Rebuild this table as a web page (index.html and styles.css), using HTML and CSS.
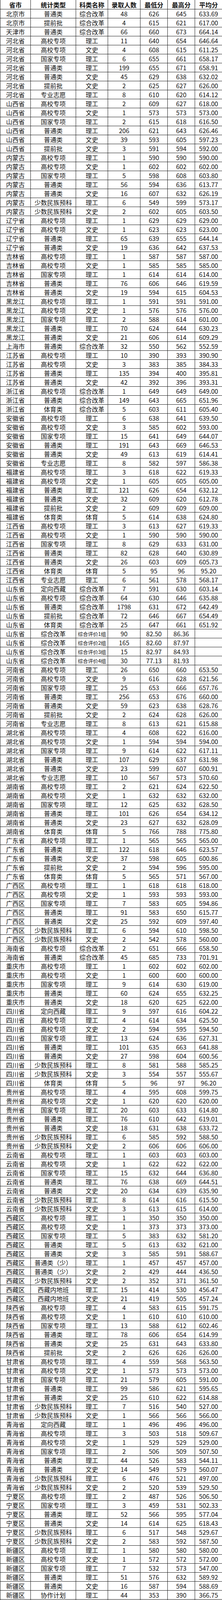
FILE: index.html
```html
<!DOCTYPE html>
<html lang="zh-CN">
<head>
<meta charset="utf-8">
<title>录取分数统计</title>
<link rel="stylesheet" href="styles.css">
</head>
<body>
<div class="sheet">
<div class="r h"><span>省市</span><span>统计类型</span><span>科类名称</span><span>录取人数</span><span>最低分</span><span>最高分</span><span>平均分</span></div>
<div class="r"><span>北京市</span><span>普通类</span><span>综合改革</span><span>48</span><span>626</span><span>645</span><span>633.69</span></div>
<div class="r"><span>北京市</span><span>提前批</span><span>综合改革</span><span>4</span><span>615</span><span>621</span><span>617.00</span></div>
<div class="r"><span>天津市</span><span>普通类</span><span>综合改革</span><span>66</span><span>660</span><span>673</span><span>664.14</span></div>
<div class="r"><span>河北省</span><span>高校专项</span><span>理工</span><span>11</span><span>640</span><span>654</span><span>646.64</span></div>
<div class="r"><span>河北省</span><span>高校专项</span><span>文史</span><span>4</span><span>608</span><span>615</span><span>611.25</span></div>
<div class="r"><span>河北省</span><span>国家专项</span><span>理工</span><span>6</span><span>655</span><span>661</span><span>658.17</span></div>
<div class="r"><span>河北省</span><span>普通类</span><span>理工</span><span>199</span><span>655</span><span>671</span><span>658.91</span></div>
<div class="r"><span>河北省</span><span>普通类</span><span>文史</span><span>45</span><span>629</span><span>638</span><span>632.02</span></div>
<div class="r"><span>河北省</span><span>提前批</span><span>文史</span><span>2</span><span>625</span><span>627</span><span>626.00</span></div>
<div class="r"><span>河北省</span><span>专业志愿</span><span>理工</span><span>8</span><span>610</span><span>620</span><span>614.12</span></div>
<div class="r"><span>山西省</span><span>高校专项</span><span>理工</span><span>2</span><span>609</span><span>627</span><span>618.00</span></div>
<div class="r"><span>山西省</span><span>高校专项</span><span>文史</span><span>1</span><span>573</span><span>573</span><span>573.00</span></div>
<div class="r"><span>山西省</span><span>国家专项</span><span>理工</span><span>2</span><span>615</span><span>618</span><span>616.50</span></div>
<div class="r"><span>山西省</span><span>普通类</span><span>理工</span><span>206</span><span>621</span><span>643</span><span>626.46</span></div>
<div class="r"><span>山西省</span><span>普通类</span><span>文史</span><span>39</span><span>593</span><span>605</span><span>597.23</span></div>
<div class="r"><span>山西省</span><span>提前批</span><span>文史</span><span>3</span><span>591</span><span>594</span><span>592.00</span></div>
<div class="r"><span>内蒙古</span><span>高校专项</span><span>理工</span><span>1</span><span>590</span><span>590</span><span>590.00</span></div>
<div class="r"><span>内蒙古</span><span>高校专项</span><span>文史</span><span>1</span><span>602</span><span>602</span><span>602.00</span></div>
<div class="r"><span>内蒙古</span><span>国家专项</span><span>理工</span><span>5</span><span>598</span><span>608</span><span>603.80</span></div>
<div class="r"><span>内蒙古</span><span>普通类</span><span>理工</span><span>56</span><span>594</span><span>636</span><span>613.77</span></div>
<div class="r"><span>内蒙古</span><span>普通类</span><span>文史</span><span>16</span><span>607</span><span>632</span><span>626.19</span></div>
<div class="r"><span>内蒙古</span><span>少数民族预科</span><span>理工</span><span>6</span><span>549</span><span>599</span><span>573.17</span></div>
<div class="r"><span>内蒙古</span><span>少数民族预科</span><span>文史</span><span>2</span><span>602</span><span>605</span><span>603.50</span></div>
<div class="r"><span>辽宁省</span><span>高校专项</span><span>理工</span><span>1</span><span>629</span><span>629</span><span>629.00</span></div>
<div class="r"><span>辽宁省</span><span>高校专项</span><span>文史</span><span>1</span><span>623</span><span>623</span><span>623.00</span></div>
<div class="r"><span>辽宁省</span><span>普通类</span><span>理工</span><span>65</span><span>639</span><span>655</span><span>644.14</span></div>
<div class="r"><span>辽宁省</span><span>普通类</span><span>文史</span><span>19</span><span>636</span><span>642</span><span>637.53</span></div>
<div class="r"><span>吉林省</span><span>高校专项</span><span>理工</span><span>1</span><span>587</span><span>587</span><span>587.00</span></div>
<div class="r"><span>吉林省</span><span>高校专项</span><span>文史</span><span>1</span><span>585</span><span>585</span><span>585.00</span></div>
<div class="r"><span>吉林省</span><span>国家专项</span><span>理工</span><span>1</span><span>614</span><span>614</span><span>614.00</span></div>
<div class="r"><span>吉林省</span><span>普通类</span><span>理工</span><span>76</span><span>606</span><span>646</span><span>619.59</span></div>
<div class="r"><span>吉林省</span><span>普通类</span><span>文史</span><span>19</span><span>594</span><span>615</span><span>604.53</span></div>
<div class="r"><span>黑龙江</span><span>高校专项</span><span>理工</span><span>1</span><span>591</span><span>591</span><span>591.00</span></div>
<div class="r"><span>黑龙江</span><span>高校专项</span><span>文史</span><span>1</span><span>576</span><span>576</span><span>576.00</span></div>
<div class="r"><span>黑龙江</span><span>国家专项</span><span>理工</span><span>2</span><span>588</span><span>614</span><span>601.00</span></div>
<div class="r"><span>黑龙江</span><span>普通类</span><span>理工</span><span>70</span><span>624</span><span>644</span><span>630.23</span></div>
<div class="r"><span>黑龙江</span><span>普通类</span><span>文史</span><span>21</span><span>606</span><span>614</span><span>609.29</span></div>
<div class="r"><span>上海市</span><span>普通类</span><span>综合改革</span><span>32</span><span>550</span><span>562</span><span>552.59</span></div>
<div class="r"><span>江苏省</span><span>高校专项</span><span>理工</span><span>10</span><span>390</span><span>393</span><span>390.90</span></div>
<div class="r"><span>江苏省</span><span>高校专项</span><span>文史</span><span>3</span><span>383</span><span>385</span><span>384.33</span></div>
<div class="r"><span>江苏省</span><span>普通类</span><span>理工</span><span>135</span><span>394</span><span>400</span><span>395.81</span></div>
<div class="r"><span>江苏省</span><span>普通类</span><span>文史</span><span>42</span><span>392</span><span>396</span><span>393.31</span></div>
<div class="r"><span>浙江省</span><span>高校专项</span><span>综合改革</span><span>1</span><span>649</span><span>649</span><span>649.00</span></div>
<div class="r"><span>浙江省</span><span>普通类</span><span>综合改革</span><span>149</span><span>643</span><span>665</span><span>651.96</span></div>
<div class="r"><span>浙江省</span><span>体育类</span><span>综合改革</span><span>5</span><span>603</span><span>611</span><span>605.40</span></div>
<div class="r"><span>安徽省</span><span>高校专项</span><span>理工</span><span>6</span><span>638</span><span>641</span><span>639.50</span></div>
<div class="r"><span>安徽省</span><span>高校专项</span><span>文史</span><span>3</span><span>585</span><span>602</span><span>593.00</span></div>
<div class="r"><span>安徽省</span><span>国家专项</span><span>理工</span><span>15</span><span>641</span><span>649</span><span>644.07</span></div>
<div class="r"><span>安徽省</span><span>普通类</span><span>理工</span><span>191</span><span>643</span><span>669</span><span>646.53</span></div>
<div class="r"><span>安徽省</span><span>普通类</span><span>文史</span><span>49</span><span>613</span><span>619</span><span>614.41</span></div>
<div class="r"><span>安徽省</span><span>专业志愿</span><span>理工</span><span>8</span><span>582</span><span>597</span><span>586.38</span></div>
<div class="r"><span>福建省</span><span>高校专项</span><span>理工</span><span>3</span><span>618</span><span>622</span><span>619.33</span></div>
<div class="r"><span>福建省</span><span>高校专项</span><span>文史</span><span>1</span><span>605</span><span>605</span><span>605.00</span></div>
<div class="r"><span>福建省</span><span>普通类</span><span>理工</span><span>121</span><span>626</span><span>654</span><span>632.12</span></div>
<div class="r"><span>福建省</span><span>普通类</span><span>文史</span><span>32</span><span>609</span><span>620</span><span>612.78</span></div>
<div class="r"><span>福建省</span><span>提前批</span><span>文史</span><span>2</span><span>609</span><span>609</span><span>609.00</span></div>
<div class="r"><span>福建省</span><span>体育类</span><span>体育</span><span>5</span><span>614</span><span>638</span><span>624.80</span></div>
<div class="r"><span>江西省</span><span>高校专项</span><span>理工</span><span>3</span><span>613</span><span>627</span><span>619.33</span></div>
<div class="r"><span>江西省</span><span>高校专项</span><span>文史</span><span>1</span><span>590</span><span>590</span><span>590.00</span></div>
<div class="r"><span>江西省</span><span>国家专项</span><span>理工</span><span>8</span><span>629</span><span>633</span><span>631.00</span></div>
<div class="r"><span>江西省</span><span>普通类</span><span>理工</span><span>82</span><span>628</span><span>640</span><span>630.89</span></div>
<div class="r"><span>江西省</span><span>普通类</span><span>文史</span><span>26</span><span>603</span><span>609</span><span>605.73</span></div>
<div class="r"><span>江西省</span><span>体育类</span><span>体育</span><span>5</span><span>95</span><span>96</span><span>95.20</span></div>
<div class="r"><span>江西省</span><span>专业志愿</span><span>理工</span><span>6</span><span>561</span><span>578</span><span>568.17</span></div>
<div class="r"><span>山东省</span><span>定向西藏</span><span>综合改革</span><span>7</span><span>591</span><span>630</span><span>603.14</span></div>
<div class="r"><span>山东省</span><span>高校专项</span><span>综合改革</span><span>64</span><span>630</span><span>646</span><span>635.88</span></div>
<div class="r"><span>山东省</span><span>普通类</span><span>综合改革</span><span>1798</span><span>631</span><span>672</span><span>642.49</span></div>
<div class="r"><span>山东省</span><span>提前批</span><span>综合改革</span><span>72</span><span>646</span><span>667</span><span>654.49</span></div>
<div class="r"><span>山东省</span><span>体育类</span><span>综合改革</span><span>25</span><span>647</span><span>661</span><span>651.92</span></div>
<div class="r"><span>山东省</span><span>综合改革</span><span class="s">综合评价1组</span><span>90</span><span>82.50</span><span>86.36</span><span></span></div>
<div class="r"><span>山东省</span><span>综合改革</span><span class="s">综合评价2组</span><span>165</span><span>82.60</span><span>87.97</span><span></span></div>
<div class="r"><span>山东省</span><span>综合改革</span><span class="s">综合评价3组</span><span>15</span><span>82.97</span><span>84.93</span><span></span></div>
<div class="r"><span>山东省</span><span>综合改革</span><span class="s">综合评价4组</span><span>30</span><span>77.13</span><span>81.93</span><span></span></div>
<div class="r"><span>河南省</span><span>高校专项</span><span>理工</span><span>26</span><span>650</span><span>660</span><span>653.50</span></div>
<div class="r"><span>河南省</span><span>高校专项</span><span>文史</span><span>9</span><span>616</span><span>628</span><span>621.56</span></div>
<div class="r"><span>河南省</span><span>国家专项</span><span>理工</span><span>25</span><span>653</span><span>666</span><span>657.76</span></div>
<div class="r"><span>河南省</span><span>普通类</span><span>理工</span><span>256</span><span>653</span><span>676</span><span>660.00</span></div>
<div class="r"><span>河南省</span><span>普通类</span><span>文史</span><span>59</span><span>623</span><span>638</span><span>628.76</span></div>
<div class="r"><span>河南省</span><span>提前批</span><span>文史</span><span>2</span><span>624</span><span>628</span><span>626.00</span></div>
<div class="r"><span>河南省</span><span>专业志愿</span><span>理工</span><span>8</span><span>613</span><span>621</span><span>615.88</span></div>
<div class="r"><span>湖北省</span><span>高校专项</span><span>理工</span><span>4</span><span>608</span><span>622</span><span>616.00</span></div>
<div class="r"><span>湖北省</span><span>高校专项</span><span>文史</span><span>1</span><span>594</span><span>594</span><span>594.00</span></div>
<div class="r"><span>湖北省</span><span>国家专项</span><span>理工</span><span>9</span><span>614</span><span>622</span><span>617.11</span></div>
<div class="r"><span>湖北省</span><span>普通类</span><span>理工</span><span>107</span><span>629</span><span>637</span><span>631.98</span></div>
<div class="r"><span>湖北省</span><span>普通类</span><span>文史</span><span>23</span><span>599</span><span>607</span><span>600.91</span></div>
<div class="r"><span>湖北省</span><span>专业志愿</span><span>理工</span><span>10</span><span>567</span><span>573</span><span>570.60</span></div>
<div class="r"><span>湖南省</span><span>高校专项</span><span>理工</span><span>2</span><span>621</span><span>624</span><span>622.50</span></div>
<div class="r"><span>湖南省</span><span>高校专项</span><span>文史</span><span>1</span><span>632</span><span>632</span><span>632.00</span></div>
<div class="r"><span>湖南省</span><span>国家专项</span><span>理工</span><span>12</span><span>625</span><span>632</span><span>628.50</span></div>
<div class="r"><span>湖南省</span><span>普通类</span><span>理工</span><span>101</span><span>626</span><span>654</span><span>634.12</span></div>
<div class="r"><span>湖南省</span><span>普通类</span><span>文史</span><span>23</span><span>627</span><span>632</span><span>628.09</span></div>
<div class="r"><span>湖南省</span><span>体育类</span><span>体育</span><span>5</span><span>766</span><span>788</span><span>775.80</span></div>
<div class="r"><span>广东省</span><span>高校专项</span><span>理工</span><span>1</span><span>565</span><span>565</span><span>565.00</span></div>
<div class="r"><span>广东省</span><span>普通类</span><span>理工</span><span>122</span><span>618</span><span>646</span><span>623.57</span></div>
<div class="r"><span>广东省</span><span>普通类</span><span>文史</span><span>37</span><span>598</span><span>605</span><span>600.86</span></div>
<div class="r"><span>广东省</span><span>提前批</span><span>文史</span><span>2</span><span>594</span><span>596</span><span>595.00</span></div>
<div class="r"><span>广东省</span><span>体育类</span><span>体育</span><span>5</span><span>565</span><span>571</span><span>567.00</span></div>
<div class="r"><span>广西区</span><span>高校专项</span><span>理工</span><span>1</span><span>618</span><span>618</span><span>618.00</span></div>
<div class="r"><span>广西区</span><span>高校专项</span><span>文史</span><span>1</span><span>593</span><span>593</span><span>593.00</span></div>
<div class="r"><span>广西区</span><span>国家专项</span><span>理工</span><span>7</span><span>583</span><span>605</span><span>594.86</span></div>
<div class="r"><span>广西区</span><span>普通类</span><span>理工</span><span>91</span><span>583</span><span>650</span><span>615.77</span></div>
<div class="r"><span>广西区</span><span>普通类</span><span>文史</span><span>25</span><span>592</span><span>609</span><span>597.40</span></div>
<div class="r"><span>广西区</span><span>少数民族预科</span><span>理工</span><span>6</span><span>594</span><span>610</span><span>598.50</span></div>
<div class="r"><span>广西区</span><span>少数民族预科</span><span>文史</span><span>2</span><span>542</span><span>578</span><span>560.00</span></div>
<div class="r"><span>海南省</span><span>高校专项</span><span>综合改革</span><span>2</span><span>651</span><span>666</span><span>658.50</span></div>
<div class="r"><span>海南省</span><span>普通类</span><span>综合改革</span><span>45</span><span>685</span><span>733</span><span>701.91</span></div>
<div class="r"><span>重庆市</span><span>高校专项</span><span>理工</span><span>1</span><span>602</span><span>602</span><span>602.00</span></div>
<div class="r"><span>重庆市</span><span>高校专项</span><span>文史</span><span>1</span><span>600</span><span>600</span><span>600.00</span></div>
<div class="r"><span>重庆市</span><span>国家专项</span><span>理工</span><span>9</span><span>614</span><span>630</span><span>619.00</span></div>
<div class="r"><span>重庆市</span><span>普通类</span><span>理工</span><span>60</span><span>624</span><span>655</span><span>632.25</span></div>
<div class="r"><span>重庆市</span><span>普通类</span><span>文史</span><span>18</span><span>620</span><span>625</span><span>622.00</span></div>
<div class="r"><span>四川省</span><span>定向西藏</span><span>理工</span><span>9</span><span>597</span><span>616</span><span>604.22</span></div>
<div class="r"><span>四川省</span><span>高校专项</span><span>理工</span><span>4</span><span>614</span><span>634</span><span>625.50</span></div>
<div class="r"><span>四川省</span><span>高校专项</span><span>文史</span><span>2</span><span>594</span><span>595</span><span>594.50</span></div>
<div class="r"><span>四川省</span><span>国家专项</span><span>理工</span><span>13</span><span>624</span><span>636</span><span>627.31</span></div>
<div class="r"><span>四川省</span><span>普通类</span><span>理工</span><span>101</span><span>635</span><span>663</span><span>641.88</span></div>
<div class="r"><span>四川省</span><span>普通类</span><span>文史</span><span>27</span><span>598</span><span>604</span><span>600.56</span></div>
<div class="r"><span>四川省</span><span>少数民族预科</span><span>理工</span><span>8</span><span>581</span><span>588</span><span>585.25</span></div>
<div class="r"><span>四川省</span><span>少数民族预科</span><span>文史</span><span>3</span><span>554</span><span>557</span><span>555.67</span></div>
<div class="r"><span>四川省</span><span>体育类</span><span>体育</span><span>5</span><span>96</span><span>97</span><span>96.20</span></div>
<div class="r"><span>贵州省</span><span>高校专项</span><span>理工</span><span>4</span><span>595</span><span>608</span><span>599.75</span></div>
<div class="r"><span>贵州省</span><span>高校专项</span><span>文史</span><span>1</span><span>620</span><span>620</span><span>620.00</span></div>
<div class="r"><span>贵州省</span><span>国家专项</span><span>理工</span><span>20</span><span>603</span><span>633</span><span>614.80</span></div>
<div class="r"><span>贵州省</span><span>普通类</span><span>理工</span><span>76</span><span>610</span><span>642</span><span>619.01</span></div>
<div class="r"><span>贵州省</span><span>普通类</span><span>文史</span><span>18</span><span>631</span><span>638</span><span>633.72</span></div>
<div class="r"><span>贵州省</span><span>少数民族预科</span><span>理工</span><span>6</span><span>585</span><span>592</span><span>588.50</span></div>
<div class="r"><span>贵州省</span><span>少数民族预科</span><span>文史</span><span>2</span><span>606</span><span>606</span><span>606.00</span></div>
<div class="r"><span>云南省</span><span>高校专项</span><span>理工</span><span>1</span><span>603</span><span>603</span><span>603.00</span></div>
<div class="r"><span>云南省</span><span>高校专项</span><span>文史</span><span>1</span><span>622</span><span>622</span><span>622.00</span></div>
<div class="r"><span>云南省</span><span>国家专项</span><span>理工</span><span>15</span><span>632</span><span>644</span><span>636.80</span></div>
<div class="r"><span>云南省</span><span>普通类</span><span>理工</span><span>76</span><span>638</span><span>669</span><span>644.51</span></div>
<div class="r"><span>云南省</span><span>普通类</span><span>文史</span><span>20</span><span>634</span><span>639</span><span>635.90</span></div>
<div class="r"><span>云南省</span><span>少数民族预科</span><span>理工</span><span>8</span><span>614</span><span>616</span><span>615.50</span></div>
<div class="r"><span>云南省</span><span>少数民族预科</span><span>文史</span><span>3</span><span>613</span><span>615</span><span>614.00</span></div>
<div class="r"><span>西藏区</span><span>高校专项</span><span>理工</span><span>1</span><span>350</span><span>350</span><span>350.00</span></div>
<div class="r"><span>西藏区</span><span>高校专项</span><span>文史</span><span>1</span><span>373</span><span>373</span><span>373.00</span></div>
<div class="r"><span>西藏区</span><span>国家专项</span><span>理工</span><span>5</span><span>383</span><span>632</span><span>581.20</span></div>
<div class="r"><span>西藏区</span><span>普通类</span><span>理工</span><span>5</span><span>613</span><span>632</span><span>621.00</span></div>
<div class="r"><span>西藏区</span><span>普通类</span><span>文史</span><span>3</span><span>585</span><span>591</span><span>588.67</span></div>
<div class="r"><span>西藏区</span><span>普通类（少）</span><span>理工</span><span>1</span><span>457</span><span>457</span><span>457.00</span></div>
<div class="r"><span>西藏区</span><span>普通类（少）</span><span>文史</span><span>2</span><span>429</span><span>444</span><span>436.50</span></div>
<div class="r"><span>西藏区</span><span>少数民族预科</span><span>文史</span><span>2</span><span>352</span><span>371</span><span>361.50</span></div>
<div class="r"><span>西藏区</span><span>西藏内地班</span><span>理工</span><span>15</span><span>414</span><span>530</span><span>456.47</span></div>
<div class="r"><span>西藏区</span><span>西藏内地班</span><span>文史</span><span>21</span><span>419</span><span>505</span><span>457.24</span></div>
<div class="r"><span>陕西省</span><span>高校专项</span><span>理工</span><span>4</span><span>583</span><span>615</span><span>591.75</span></div>
<div class="r"><span>陕西省</span><span>高校专项</span><span>文史</span><span>1</span><span>610</span><span>610</span><span>610.00</span></div>
<div class="r"><span>陕西省</span><span>国家专项</span><span>理工</span><span>13</span><span>588</span><span>612</span><span>602.46</span></div>
<div class="r"><span>陕西省</span><span>普通类</span><span>理工</span><span>78</span><span>606</span><span>654</span><span>614.99</span></div>
<div class="r"><span>陕西省</span><span>普通类</span><span>文史</span><span>25</span><span>631</span><span>643</span><span>633.80</span></div>
<div class="r"><span>陕西省</span><span>提前批</span><span>文史</span><span>2</span><span>626</span><span>626</span><span>626.00</span></div>
<div class="r"><span>甘肃省</span><span>高校专项</span><span>理工</span><span>4</span><span>559</span><span>568</span><span>563.50</span></div>
<div class="r"><span>甘肃省</span><span>高校专项</span><span>文史</span><span>1</span><span>573</span><span>573</span><span>573.00</span></div>
<div class="r"><span>甘肃省</span><span>国家专项</span><span>理工</span><span>21</span><span>579</span><span>605</span><span>591.00</span></div>
<div class="r"><span>甘肃省</span><span>普通类</span><span>理工</span><span>99</span><span>586</span><span>621</span><span>595.65</span></div>
<div class="r"><span>甘肃省</span><span>普通类</span><span>文史</span><span>25</span><span>610</span><span>622</span><span>614.88</span></div>
<div class="r"><span>甘肃省</span><span>少数民族预科</span><span>理工</span><span>7</span><span>516</span><span>540</span><span>527.00</span></div>
<div class="r"><span>甘肃省</span><span>少数民族预科</span><span>文史</span><span>1</span><span>566</span><span>566</span><span>566.00</span></div>
<div class="r"><span>青海省</span><span>定向西藏</span><span>理工</span><span>1</span><span>496</span><span>496</span><span>496.00</span></div>
<div class="r"><span>青海省</span><span>高校专项</span><span>理工</span><span>3</span><span>503</span><span>518</span><span>509.67</span></div>
<div class="r"><span>青海省</span><span>高校专项</span><span>文史</span><span>1</span><span>529</span><span>529</span><span>529.00</span></div>
<div class="r"><span>青海省</span><span>国家专项</span><span>理工</span><span>2</span><span>506</span><span>509</span><span>507.50</span></div>
<div class="r"><span>青海省</span><span>普通类</span><span>理工</span><span>44</span><span>526</span><span>583</span><span>544.11</span></div>
<div class="r"><span>青海省</span><span>普通类</span><span>文史</span><span>14</span><span>549</span><span>579</span><span>560.07</span></div>
<div class="r"><span>青海省</span><span>少数民族预科</span><span>理工</span><span>6</span><span>476</span><span>521</span><span>497.00</span></div>
<div class="r"><span>青海省</span><span>少数民族预科</span><span>文史</span><span>2</span><span>520</span><span>539</span><span>529.50</span></div>
<div class="r"><span>宁夏区</span><span>高校专项</span><span>理工</span><span>2</span><span>487</span><span>526</span><span>506.50</span></div>
<div class="r"><span>宁夏区</span><span>国家专项</span><span>理工</span><span>3</span><span>459</span><span>531</span><span>502.33</span></div>
<div class="r"><span>宁夏区</span><span>普通类</span><span>理工</span><span>52</span><span>566</span><span>595</span><span>577.04</span></div>
<div class="r"><span>宁夏区</span><span>普通类</span><span>文史</span><span>14</span><span>614</span><span>625</span><span>618.43</span></div>
<div class="r"><span>宁夏区</span><span>少数民族预科</span><span>理工</span><span>6</span><span>517</span><span>548</span><span>529.67</span></div>
<div class="r"><span>宁夏区</span><span>少数民族预科</span><span>文史</span><span>2</span><span>583</span><span>592</span><span>587.50</span></div>
<div class="r"><span>新疆区</span><span>高校专项</span><span>理工</span><span>1</span><span>580</span><span>580</span><span>580.00</span></div>
<div class="r"><span>新疆区</span><span>高校专项</span><span>文史</span><span>1</span><span>572</span><span>572</span><span>572.00</span></div>
<div class="r"><span>新疆区</span><span>国家专项</span><span>理工</span><span>7</span><span>532</span><span>573</span><span>547.00</span></div>
<div class="r"><span>新疆区</span><span>普通类</span><span>理工</span><span>51</span><span>576</span><span>632</span><span>589.92</span></div>
<div class="r"><span>新疆区</span><span>普通类</span><span>文史</span><span>16</span><span>587</span><span>594</span><span>588.69</span></div>
<div class="r"><span>新疆区</span><span>协作计划</span><span>理工</span><span>44</span><span>353</span><span>390</span><span>366.75</span></div>
<div class="r"><span>新疆区</span><span>协作计划</span><span>文史</span><span>16</span><span>407</span><span>442</span><span>416.81</span></div>
<div class="r"><span>新疆区</span><span>新疆内地班</span><span>理工</span><span>28</span><span>530</span><span>632</span><span>567.46</span></div>
<div class="r"><span>新疆区</span><span>新疆内地班</span><span>文史</span><span>6</span><span>465</span><span>590</span><span>555.17</span></div>
<div class="r"><span>港澳台侨</span><span>联招</span><span>理工</span><span>22</span><span>534</span><span>583</span><span>550.18</span></div>
<div class="r"><span>港澳台侨</span><span>联招</span><span>文史</span><span>28</span><span>483</span><span>584</span><span>506.84</span></div>
</div>
</body>
</html>
```

FILE: styles.css
```css
html, body {
  margin: 0;
  padding: 0;
  background: #ffffff;
}

body {
  font-family: "Noto Sans CJK SC", "Noto Sans", sans-serif;
  font-size: 16px;
  color: #111111;
  overflow: hidden;
}

.sheet {
  width: 569px;
}

.r {
  display: grid;
  grid-template-columns: 78px 116px 82px 83px 70px 70px 70px;
  height: 23px;
}

.r > span {
  box-sizing: border-box;
  height: 23px;
  border-left: 1px solid #1a1a1a;
  border-bottom: 1px solid #1a1a1a;
  display: flex;
  align-items: center;
  justify-content: center;
  white-space: nowrap;
  line-height: 1;
  overflow: hidden;
}

.r.h {
  height: 24px;
}

.r.h > span {
  height: 24px;
  font-weight: 700;
}

.r > span.s {
  font-size: 13px;
}
```
